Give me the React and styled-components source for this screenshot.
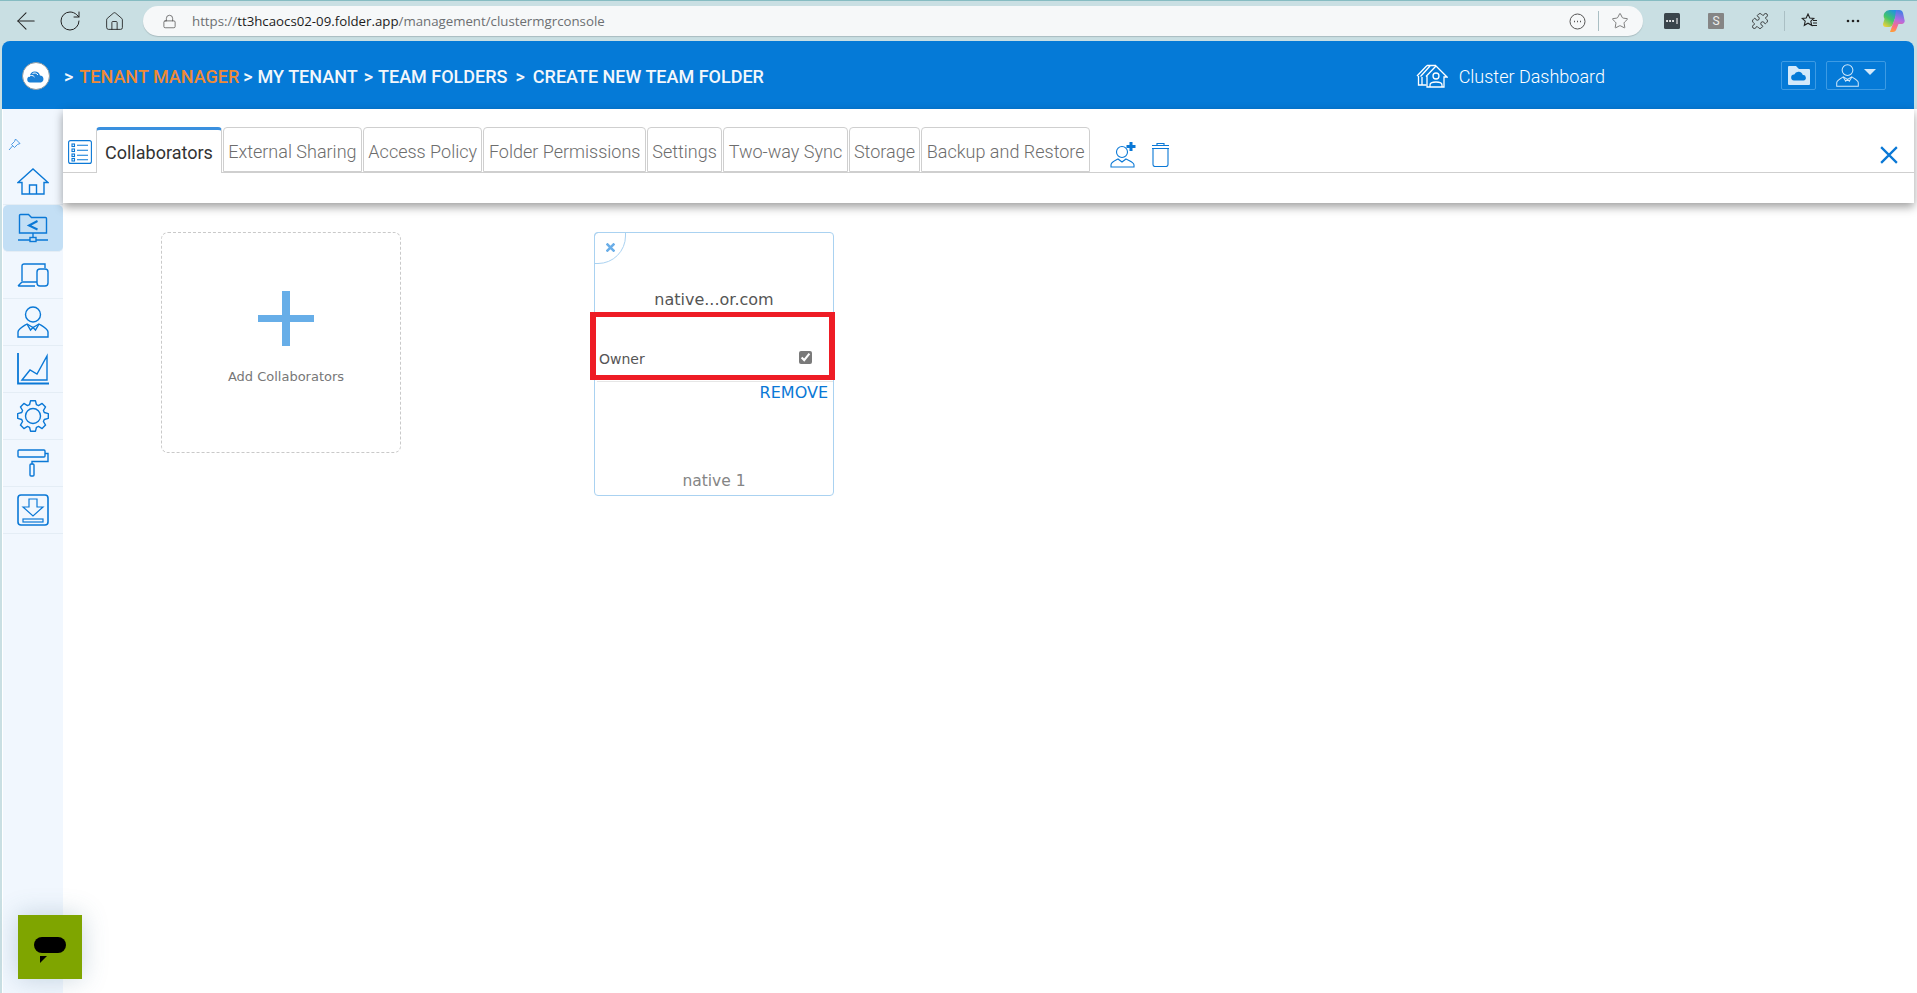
import React from 'react';
import styled, { createGlobalStyle } from 'styled-components';
import { ArrowLeft, RotateCw, Home, Lock, Star, Puzzle } from 'lucide-react';

const GlobalStyle = createGlobalStyle`
  html, body {
    margin: 0;
    padding: 0;
    height: 100%;
    background: #c9dfe3;
    overflow: hidden;
    font-family: Roboto, "Liberation Sans", sans-serif;
  }
  #root { height: 100%; }
`;

const Page = styled.div`
  height: 993px;
  display: flex;
  flex-direction: column;
`;

const BrowserBar = styled.div`
  height: 41px;
  flex: none;
  display: flex;
  align-items: center;
  box-sizing: border-box;
  padding: 0 4px 0 4px;
  border-top: 1px solid #86bcc2;
  background: #c9dfe3;
`;

const BarButton = styled.div`
  width: ${(p) => p.$w || 44}px;
  height: 30px;
  flex: none;
  display: flex;
  align-items: center;
  justify-content: center;
  color: #222;
`;

const AddressBar = styled.div`
  flex: 1;
  height: 30px;
  margin-left: 7px;
  margin-right: 7px;
  display: flex;
  align-items: center;
  padding: 0 14px 0 19px;
  box-sizing: border-box;
  border-radius: 15px;
  background: #f6f8f9;
  box-shadow: 0 1px 1px #a9bcc0;
`;

const Url = styled.div`
  flex: 1;
  margin-left: 15px;
  font-family: "Open Sans", sans-serif;
  font-size: 13.25px;
  color: #6c6f72;
  span { color: #1c1c1c; }
`;

const AddressIcons = styled.div`
  display: flex;
  align-items: center;
  gap: 10px;
  color: #555;
`;

const BarDivider = styled.div`
  width: 1px;
  height: 20px;
  margin: 0 ${(p) => p.$m || 2}px;
  background: #aabfc4;
`;

const Frame = styled.div`
  flex: 1;
  min-height: 0;
  margin: 0 0 0 2px;
  display: flex;
  flex-direction: column;
`;

const Header = styled.header`
  height: 68px;
  flex: none;
  margin-right: 3px;
  display: flex;
  align-items: center;
  box-sizing: border-box;
  padding: 2px 28px 0 20px;
  border-radius: 8px 8px 0 0;
  background: #057ad7;
  color: #fff;
`;

const Logo = styled.div`
  width: 28px;
  height: 28px;
  border-radius: 50%;
  background: #fff;
  display: flex;
  align-items: center;
  justify-content: center;
  border: 1.5px solid #8d9aa3;
  box-sizing: border-box;
`;

const Crumbs = styled.nav`
  display: flex;
  align-items: center;
  margin-left: 14px;
  font-size: 18px;
  font-weight: 500;
  white-space: nowrap;
`;

const Crumb = styled.span`
  margin-left: ${(p) => p.$ml || 0}px;
  color: ${(p) => (p.$accent ? '#ef8a36' : '#f3f7fb')};
`;

const Dashboard = styled.div`
  margin-left: auto;
  margin-right: 176px;
  display: flex;
  align-items: center;
  gap: 11px;
  font-size: 18px;
  font-weight: 300;
`;

const HeaderButton = styled.div`
  width: ${(p) => p.$w}px;
  height: 29px;
  margin-left: ${(p) => p.$ml || 0}px;
  margin-top: -2px;
  box-sizing: border-box;
  display: flex;
  align-items: center;
  justify-content: center;
  gap: 5px;
  border: 1px solid #3d9be4;
  border-radius: 2px;
  color: #d4e9fa;
`;

const Caret = styled.div`
  width: 0;
  height: 0;
  margin-top: -7px;
  border-left: 6px solid transparent;
  border-right: 6px solid transparent;
  border-top: 6px solid #d4e9fa;
`;

const Body = styled.div`
  flex: 1;
  min-height: 0;
  display: flex;
  background: #fff;
`;

const Sidebar = styled.aside`
  width: 60px;
  flex: none;
  margin-left: 1px;
  background: #f1f7fe;
  display: flex;
  flex-direction: column;
`;

const PinRow = styled.div`
  height: 49px;
  box-sizing: border-box;
  padding: 27px 0 0 5px;
  color: #3a8fe0;
`;

const NavItem = styled.div`
  height: 47px;
  flex: none;
  box-sizing: border-box;
  display: flex;
  align-items: center;
  justify-content: center;
  border-bottom: 1px solid #e4edf5;
  border-radius: ${(p) => (p.$active ? '5px' : '0')};
  background: ${(p) => (p.$active ? '#c3dff5' : 'transparent')};
  color: #0a78d6;
`;

const Content = styled.main`
  flex: 1;
  min-width: 0;
  display: flex;
  flex-direction: column;
`;

const TabPanel = styled.div`
  height: 94px;
  flex: none;
  margin-right: 3px;
  box-sizing: border-box;
  padding-top: 18px;
  background: #fff;
  box-shadow: 0 4px 9px rgba(0, 0, 0, 0.38);
  position: relative;
`;

const TabRow = styled.div`
  height: 45px;
  display: flex;
  align-items: flex-end;
  border-bottom: 1px solid #cfcfcf;
`;

const ListBox = styled.div`
  width: 33px;
  height: 44px;
  flex: none;
  display: flex;
  align-items: flex-start;
  padding: 12px 0 0 5px;
  box-sizing: border-box;
`;

const Tab = styled.div`
  height: ${(p) => (p.$active ? 46 : 45)}px;
  margin-bottom: ${(p) => (p.$active ? -1 : 0)}px;
  margin-right: 1px;
  box-sizing: border-box;
  padding: ${(p) => (p.$active ? '2px 8px 0' : '4px 4.4px 0')};
  display: flex;
  align-items: center;
  font-size: 18px;
  font-weight: ${(p) => (p.$active ? 400 : 300)};
  color: ${(p) => (p.$active ? '#333' : '#6d6d6d')};
  background: #fff;
  border: 1px solid #cfcfcf;
  border-bottom: ${(p) => (p.$active ? 'none' : '1px solid #cfcfcf')};
  border-top: ${(p) => (p.$active ? '3px solid #3a90df' : '1px solid #cfcfcf')};
  border-radius: 4px 4px 0 0;
  white-space: nowrap;
`;

const TabActions = styled.div`
  display: flex;
  align-items: center;
  gap: 13px;
  margin-left: 19px;
  padding-bottom: 4px;
  color: #0a78d6;
`;

const CloseButton = styled.div`
  margin-left: auto;
  margin-right: 16px;
  padding-bottom: 8px;
  color: #0a78d6;
  display: flex;
`;

const Cards = styled.section`
  display: flex;
  align-items: flex-start;
  gap: 193px;
  padding: 29px 0 0 98px;
`;

const AddCard = styled.div`
  width: 240px;
  height: 221px;
  box-sizing: border-box;
  display: flex;
  flex-direction: column;
  align-items: center;
  padding-top: 58px;
  border: 1px dashed #c9c9c9;
  border-radius: 7px;
`;

const Plus = styled.div`
  width: 56px;
  height: 55px;
  margin-left: 10px;
  background:
    linear-gradient(#67aee8, #67aee8) center / 8px 100% no-repeat,
    linear-gradient(#67aee8, #67aee8) center / 100% 7px no-repeat;
`;

const AddLabel = styled.div`
  margin-top: 23px;
  margin-left: 10px;
  font-family: "DejaVu Sans", sans-serif;
  font-size: 13px;
  color: #777;
`;

const UserCard = styled.div`
  width: 240px;
  height: 264px;
  box-sizing: border-box;
  position: relative;
  display: flex;
  flex-direction: column;
  border: 1px solid #aad2f1;
  border-radius: 4px;
  font-family: "DejaVu Sans", sans-serif;
`;

const CornerClose = styled.div`
  position: absolute;
  top: -1px;
  left: -1px;
  width: 32px;
  height: 32px;
  box-sizing: border-box;
  display: flex;
  align-items: center;
  justify-content: center;
  padding-bottom: 2px;
  border: 1px solid #aad2f1;
  border-radius: 4px 0 28px 0;
  color: #6aaee8;
`;

const UserName = styled.div`
  margin-top: 57px;
  text-align: center;
  font-size: 16px;
  line-height: 20px;
  color: #555;
`;

const RoleRow = styled.label`
  height: 31px;
  margin: 40px 0 0 2px;
  padding: 0 21px 0 2px;
  display: flex;
  align-items: flex-start;
  justify-content: space-between;
  border-bottom: 1px solid #e6e6e6;
  font-size: 14px;
  line-height: 18px;
  color: #555;
`;

const RoleCheck = styled.input`
  width: 13px;
  height: 13px;
  margin: 1px 0 0;
  accent-color: #7a7a7a;
`;

const RemoveLink = styled.a`
  align-self: flex-end;
  margin-top: 1px;
  margin-right: 5px;
  font-size: 16px;
  line-height: 20px;
  color: #0a78d6;
`;

const CardFooter = styled.div`
  margin-top: auto;
  padding-bottom: 4px;
  text-align: center;
  font-size: 15.5px;
  line-height: 20px;
  color: #858585;
`;

const Highlight = styled.div`
  position: absolute;
  left: -5px;
  top: 79px;
  width: 245px;
  height: 68px;
  box-sizing: border-box;
  border: solid #ee1c25;
  border-width: 5px 6px;
  pointer-events: none;
`;

const ChatWidget = styled.div`
  position: fixed;
  left: 18px;
  top: 915px;
  width: 64px;
  height: 64px;
  background: #7fa500;
  box-shadow: 0 0 26px rgba(70, 110, 140, 0.28);
`;

const ChatBubble = styled.div`
  position: absolute;
  left: 16px;
  top: 22px;
  width: 32px;
  height: 16px;
  border-radius: 8px;
  background: #000;
  &::after {
    content: '';
    position: absolute;
    left: 6px;
    top: 19px;
    border-top: 7px solid #000;
    border-right: 7px solid transparent;
  }
`;

const stroke = { fill: 'none', stroke: 'currentColor', strokeWidth: 1.4 };

const CrossIcon = ({ size, weight }) => (
  <svg width={size} height={size} viewBox="0 0 16 16" fill="none" stroke="currentColor" strokeWidth={weight}>
    <path d="M1 1l14 14M15 1L1 15" />
  </svg>
);

const HomeIcon = () => (
  <svg width="32" height="27" viewBox="0 0 32 27" {...stroke}>
    <path d="M1 14.5 16 1l15 13.5h-4V26H5V14.5z" />
    <path d="M12.500 26v-9h7v9" />
  </svg>
);

const FolderShareIcon = () => (
  <svg width="30" height="30" viewBox="0 0 30 30" {...stroke}>
    <path d="M1.500 20V2.500a1 1 0 0 1 1-1h8l3 3h14a1 1 0 0 1 1 1V20z" />
    <path d="M15 20v4M0 27h12M18 27h12" />
    <rect x="12" y="24.500" width="6" height="4" />
    <path d="M19.500 8 11 12.500l8.500 4" strokeWidth="2" />
  </svg>
);

const DevicesIcon = () => (
  <svg width="32" height="24" viewBox="0 0 32 24" {...stroke}>
    <path d="M5 18V3a2 2 0 0 1 2-2h21v4" />
    <path d="M1 23l4-4h15M1 23h17" />
    <rect x="20" y="6" width="11" height="17" rx="3" />
  </svg>
);

const UserIcon = ({ size = 32 }) => (
  <svg width={size} height={size} viewBox="0 0 32 32" {...stroke}>
    <circle cx="16" cy="8.500" r="7.500" />
    <path d="M1 31v-5c0-3 4-5 9-8l6 3.500 6-3.500c5 3 9 5 9 8v5z" />
    <path d="M10 18l3.500 6 2.500-2.500 2.500 2.500 3.500-6" />
  </svg>
);

const ChartIcon = () => (
  <svg width="32" height="32" viewBox="0 0 32 32" {...stroke}>
    <path d="M1 0v30.500h31" strokeWidth="1.800" />
    <path d="M5 27l8-10 7 4L30 3v24z" />
  </svg>
);

// 8 rounded teeth around a ring, as in the sidebar gear
const gearPath = () => {
  const pts = [];
  for (let i = 0; i < 8; i += 1) {
    const a = (i * Math.PI) / 4 - Math.PI / 8;
    const step = Math.PI / 4;
    [[11.8, 0.12], [15.5, 0.3], [15.5, 0.7], [11.8, 0.88]].forEach(([r, f]) => {
      const t = a + f * step;
      pts.push(`${(16 + r * Math.cos(t)).toFixed(2)} ${(16 + r * Math.sin(t)).toFixed(2)}`);
    });
  }
  return `M${pts.join('L')}Z`;
};

const GearIcon = () => (
  <svg width="32" height="32" viewBox="0 0 32 32" {...stroke} strokeLinejoin="round">
    <path d={gearPath()} />
    <circle cx="16" cy="16" r="7.500" />
  </svg>
);

const RollerIcon = () => (
  <svg width="32" height="28" viewBox="0 0 32 28" {...stroke}>
    <rect x="1" y="1" width="27" height="7" rx="1" />
    <path d="M28 4.500h3v8H15v3" />
    <rect x="13" y="15" width="4" height="12" rx="1" />
  </svg>
);

const DownloadIcon = () => (
  <svg width="32" height="32" viewBox="0 0 32 32" {...stroke} strokeWidth="1.600">
    <rect x="1" y="1" width="30" height="30" rx="3" />
    <path d="M12 5h8v8h6L16 22 6 13h6z" strokeWidth="1.200" />
    <rect x="6" y="25" width="20" height="3" strokeWidth="1.200" />
  </svg>
);

const PinIcon = () => (
  <svg width="13" height="13" viewBox="0 0 13 13" fill="none" stroke="currentColor" strokeWidth="0.9">
    <path d="M7.500 1 12 5.500 9.500 6.500 6.500 9.500 3.500 6.500 6.500 3.500zM4.500 8 1 12" />
  </svg>
);

const ListIcon = () => (
  <svg width="24" height="24" viewBox="0 0 24 24" fill="none" stroke="#0a78d6" strokeWidth="1.100">
    <rect x="0.600" y="0.600" width="22.800" height="22.800" rx="2" />
    <rect x="4" y="4" width="2.500" height="2.500" />
    <rect x="4" y="9" width="2.500" height="2.500" />
    <rect x="4" y="14" width="2.500" height="2.500" />
    <rect x="4" y="18.500" width="2.500" height="2.500" />
    <path d="M9 5.200h11M9 10.200h11M9 15.200h11M9 19.700h11" />
  </svg>
);

const AddUserIcon = () => (
  <svg width="28" height="27" viewBox="0 0 28 27" fill="none" stroke="currentColor" strokeWidth="1.100">
    <circle cx="12" cy="11" r="5.500" />
    <path d="M1 26v-2c0-3 3-4 7-6l4 3 4-3c4 2 8 3 8 6v2z" />
    <path d="M21 1v9M16.500 5.500h9" strokeWidth="3" />
  </svg>
);

const TrashIcon = () => (
  <svg width="19" height="25" viewBox="0 0 19 25" fill="none" stroke="currentColor" strokeWidth="1.100">
    <path d="M1 3.500h17M6 3.500V1.500h7v2M1 6.500h17" />
    <path d="M2 6.500v16a2 2 0 0 0 2 2h11a2 2 0 0 0 2-2v-16" />
  </svg>
);

const ClusterIcon = () => (
  <svg width="32" height="24" viewBox="0 0 32 24" fill="none" stroke="#fff" strokeWidth="1.300">
    <path d="M1 12 11 1.500M4.500 12.500 14 2M11 1.500h9" />
    <path d="M10 12.500 20 2l11 11h-3v10H11V12z" />
    <path d="M2.500 12v9h8M6 13v8" />
    <circle cx="20" cy="12" r="3" />
    <path d="M14 23v-2c0-2 3-3 6-3s6 1 6 3v2" />
  </svg>
);

const FolderCloudIcon = () => (
  <svg width="22" height="20" viewBox="0 0 22 20">
    <path d="M0 2a1 1 0 0 1 1-1h7l3 3h10a1 1 0 0 1 1 1v14a1 1 0 0 1-1 1H1a1 1 0 0 1-1-1z" fill="#d4e9fa" />
    <path d="M6 15.500a3 3 0 0 1 .3-6 4.500 4.500 0 0 1 8.500 .6 2.700 2.700 0 0 1 .7 5.400z" fill="#057ad7" />
  </svg>
);

const LogoIcon = () => (
  <svg width="18" height="13" viewBox="0 0 18 13">
    <path d="M3.500 12.500a3 3 0 0 1-.5-6 5 5 0 0 1 4-5 5.500 5.500 0 0 1 6 4 3.600 3.600 0 0 1 1 7z" fill="#1b80d6" />
    <path d="M2 6.500c1.500-1.500 4-1.500 5.500 .5M5.500 3.500c2-1 4-.5 5.500 1.500" stroke="#fff" strokeWidth="1" fill="none" />
  </svg>
);

const MoreCircleIcon = () => (
  <svg width="17" height="17" viewBox="0 0 17 17" fill="none" stroke="#555" strokeWidth="1">
    <circle cx="8.500" cy="8.500" r="7.500" />
    <path d="M5 8.500h1M8 8.500h1M11 8.500h1" strokeWidth="1.400" />
  </svg>
);

const MoreDotsIcon = () => (
  <svg width="14" height="4" viewBox="0 0 14 4" fill="#222">
    <circle cx="2" cy="2" r="1.300" />
    <circle cx="7" cy="2" r="1.300" />
    <circle cx="12" cy="2" r="1.300" />
  </svg>
);

const PasswordExt = () => (
  <svg width="16" height="16" viewBox="0 0 16 16">
    <rect width="16" height="16" rx="1.500" fill="#3a454c" />
    <path d="M3 8h.1M6 8h.1M9 8h.1" stroke="#fff" strokeWidth="2" strokeLinecap="round" />
    <path d="M13 5v6" stroke="#fff" strokeWidth="1" />
  </svg>
);

const GreyExt = styled.div`
  width: 16px;
  height: 16px;
  background: #858585;
  border-radius: 1px;
  display: flex;
  align-items: center;
  justify-content: center;
  font-size: 12px;
  color: #eee;
`;

const FavouritesIcon = () => (
  <svg width="17" height="16" viewBox="0 0 17 16" fill="none" stroke="#222" strokeWidth="1.100">
    <path d="M7 1l1.800 4 4 .4-3 2.700.9 4.200L7 10.200 3.300 12.300l.9-4.200-3-2.700 4-.4z" />
    <path d="M12 7.500h4M12 10h4M11 12.500h5" />
  </svg>
);

const CopilotIcon = () => (
  <svg width="22" height="24" viewBox="0 0 22 24">
    <defs>
      <linearGradient id="cpa" x1="0.800" y1="0" x2="0.200" y2="1">
        <stop offset="0" stopColor="#1f8fe8" />
        <stop offset="0.550" stopColor="#42c66a" />
        <stop offset="1" stopColor="#e8d03a" />
      </linearGradient>
      <linearGradient id="cpb" x1="0.600" y1="0" x2="0.400" y2="1">
        <stop offset="0" stopColor="#3d7fe8" />
        <stop offset="0.450" stopColor="#b66be0" />
        <stop offset="0.800" stopColor="#ff6f7a" />
        <stop offset="1" stopColor="#ff9a3c" />
      </linearGradient>
    </defs>
    <path d="M7 1h8l-5 14a4 4 0 0 1-4 3H3a3 3 0 0 1-3-3l1.500-5A6 6 0 0 1 7 1z" fill="url(#cpa)" />
    <path d="M13 1h3a4 4 0 0 1 4 3l1.500 7a3 3 0 0 1-3 4h-3l-2 5a4 4 0 0 1-4 3H7l5-14z" fill="url(#cpb)" />
  </svg>
);

const TABS = [
  'External Sharing',
  'Access Policy',
  'Folder Permissions',
  'Settings',
  'Two-way Sync',
  'Storage',
  'Backup and Restore',
];

const App = () => (
  <Page>
    <GlobalStyle />
    <BrowserBar>
      <BarButton><ArrowLeft size={28} strokeWidth={0.9} /></BarButton>
      <BarButton><RotateCw size={24} strokeWidth={1} /></BarButton>
      <BarButton><Home size={21} strokeWidth={1} /></BarButton>
      <AddressBar>
        <Lock size={15} strokeWidth={1.1} color="#444" />
        <Url>https://<span>tt3hcaocs02-09.folder.app</span>/management/clustermgrconsole</Url>
        <AddressIcons>
          <MoreCircleIcon />
          <BarDivider />
          <Star size={18} strokeWidth={1} color="#555" />
        </AddressIcons>
      </AddressBar>
      <BarButton><PasswordExt /></BarButton>
      <BarButton><GreyExt>S</GreyExt></BarButton>
      <BarButton><Puzzle size={18} strokeWidth={1.1} /></BarButton>
      <BarDivider />
      <BarButton><FavouritesIcon /></BarButton>
      <BarButton><MoreDotsIcon /></BarButton>
      <BarButton $w={38}><CopilotIcon /></BarButton>
    </BrowserBar>
    <Frame>
      <Header>
        <Logo><LogoIcon /></Logo>
        <Crumbs>
          <Crumb>&gt;</Crumb>
          <Crumb $accent $ml={6}>TENANT MANAGER</Crumb>
          <Crumb $ml={4}>&gt;</Crumb>
          <Crumb $ml={5}>MY TENANT</Crumb>
          <Crumb $ml={6}>&gt;</Crumb>
          <Crumb $ml={5}>TEAM FOLDERS</Crumb>
          <Crumb $ml={8}>&gt;</Crumb>
          <Crumb $ml={8}>CREATE NEW TEAM FOLDER</Crumb>
        </Crumbs>
        <Dashboard><ClusterIcon />Cluster Dashboard</Dashboard>
        <HeaderButton $w={35}><FolderCloudIcon /></HeaderButton>
        <HeaderButton $w={60} $ml={10}>
          <UserIcon size={23} />
          <Caret />
        </HeaderButton>
      </Header>
      <Body>
        <Sidebar>
          <PinRow><PinIcon /></PinRow>
          <NavItem><HomeIcon /></NavItem>
          <NavItem $active><FolderShareIcon /></NavItem>
          <NavItem><DevicesIcon /></NavItem>
          <NavItem><UserIcon /></NavItem>
          <NavItem><ChartIcon /></NavItem>
          <NavItem><GearIcon /></NavItem>
          <NavItem><RollerIcon /></NavItem>
          <NavItem><DownloadIcon /></NavItem>
        </Sidebar>
        <Content>
          <TabPanel>
            <TabRow>
              <ListBox><ListIcon /></ListBox>
              <Tab $active>Collaborators</Tab>
              {TABS.map((t) => <Tab key={t}>{t}</Tab>)}
              <TabActions>
                <AddUserIcon />
                <TrashIcon />
              </TabActions>
              <CloseButton><CrossIcon size={18} weight={2} /></CloseButton>
            </TabRow>
          </TabPanel>
          <Cards>
            <AddCard>
              <Plus />
              <AddLabel>Add Collaborators</AddLabel>
            </AddCard>
            <UserCard>
              <CornerClose><CrossIcon size={9} weight={4.5} /></CornerClose>
              <UserName>native...or.com</UserName>
              <RoleRow>
                Owner
                <RoleCheck type="checkbox" checked readOnly />
              </RoleRow>
              <RemoveLink>REMOVE</RemoveLink>
              <CardFooter>native 1</CardFooter>
              <Highlight />
            </UserCard>
          </Cards>
        </Content>
      </Body>
    </Frame>
    <ChatWidget><ChatBubble /></ChatWidget>
  </Page>
);

export default App;
